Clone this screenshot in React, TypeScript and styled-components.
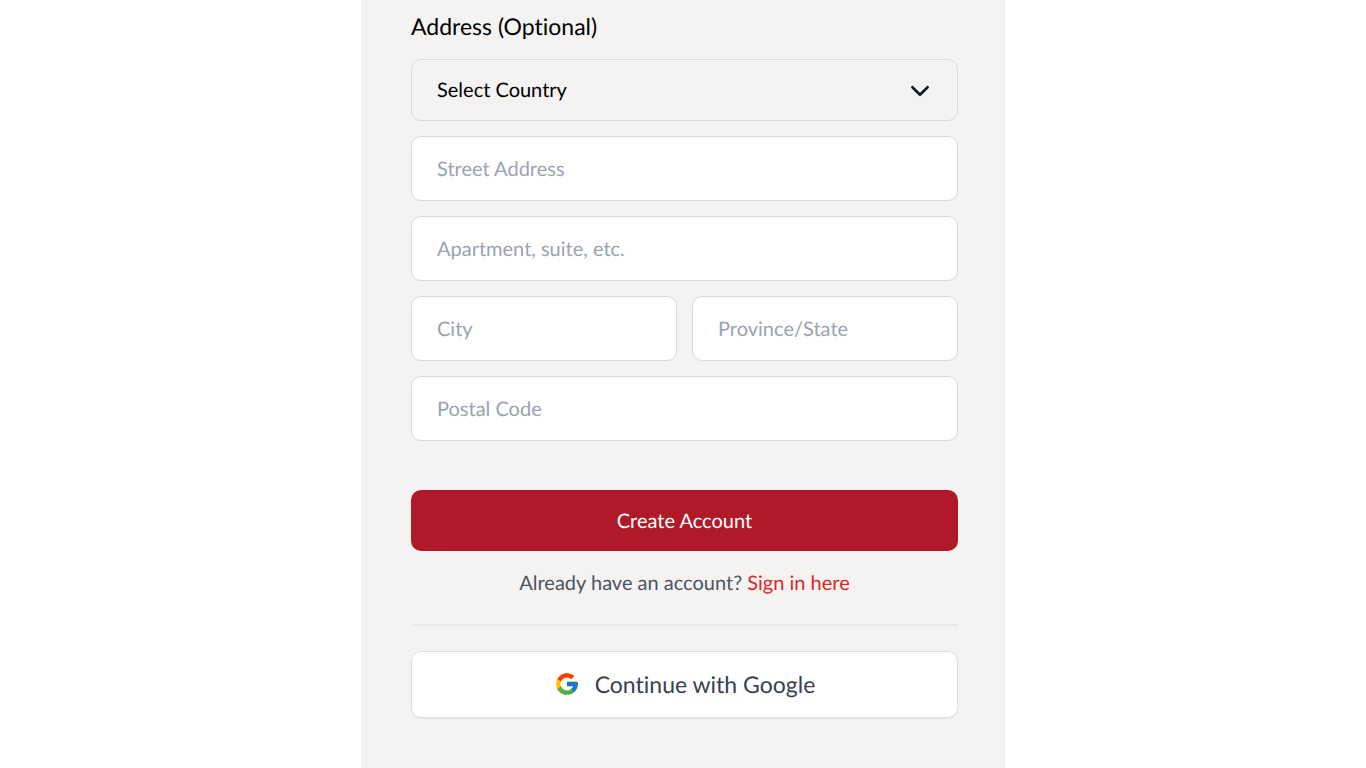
import React from "react";
import styled, { createGlobalStyle, css } from "styled-components";

const GlobalStyle = createGlobalStyle`
  *, *::before, *::after { box-sizing: border-box; }
  body {
    margin: 0;
    background: #fff;
    font-family: Lato, sans-serif;
    color: #000;
  }
  body, input, select, button {
    font-variant-ligatures: none;
    text-rendering: geometricPrecision;
  }
`;

const Page = styled.main`
  display: flex;
  justify-content: center;
  min-height: 100vh;
`;

const Panel = styled.form`
  width: 100%;
  max-width: 644px;
  padding: 8px 47px 50px 50px;
  background: #f4f3f2;
`;

const Address = styled.fieldset`
  display: grid;
  gap: 15px;
  min-width: 0;
  margin: 0;
  padding: 0;
  border: 0;
`;

const Legend = styled.legend`
  padding: 0;
  margin-bottom: 15px;
  font-size: 23px;
  line-height: 36px;
`;

const fieldStyle = css`
  display: block;
  width: 100%;
  min-width: 0;
  height: 65px;
  padding: 0 25px;
  border: 1px solid #d5d9e0;
  border-radius: 10px;
  font-family: Lato, sans-serif;
  font-size: 20px;
  line-height: 30px;
`;

const Field = styled.input`
  ${fieldStyle}
  background: #fff;
  color: #000;
  &::placeholder { color: #9ca3af; opacity: 1; }
`;

const SelectWrap = styled.div`
  position: relative;
`;

const Select = styled.select`
  ${fieldStyle}
  height: 62px;
  appearance: none;
  background: transparent;
  color: #000;
`;

const Chevron = styled.svg`
  position: absolute;
  top: 19px;
  right: 25px;
  width: 26px;
  height: 26px;
  pointer-events: none;
`;

const Row = styled.div`
  display: grid;
  grid-template-columns: 1fr 1fr;
  gap: 15px;
`;

const Submit = styled.button`
  width: 100%;
  height: 61px;
  margin-top: 49px;
  border: 0;
  border-radius: 10px;
  background: #b01a28;
  color: #fff;
  font-family: Lato, sans-serif;
  font-size: 20px;
  line-height: 30px;
`;

const SignIn = styled.p`
  margin: 16px 0 25px;
  text-align: center;
  font-size: 20px;
  line-height: 32px;
  color: #4b5563;
`;

const SignInLink = styled.a`
  color: #dc2626;
  text-decoration: none;
`;

const Divider = styled.hr`
  margin: 0 0 25px;
  border: 0;
  border-top: 2px solid #e8e8e8;
`;

const GoogleButton = styled.button`
  display: flex;
  align-items: center;
  justify-content: center;
  gap: 15px;
  width: 100%;
  height: 67px;
  padding: 0 0 2px;
  border: 1px solid #dcdee1;
  border-radius: 10px;
  background: #fff;
  box-shadow: 0 1px 2px rgba(0, 0, 0, 0.06);
  color: #374151;
  font-family: Lato, sans-serif;
  font-size: 23px;
  line-height: 36px;
`;

const GoogleIcon = () => (
  <svg width="26" height="26" viewBox="0 0 48 48" aria-hidden="true">
    <path fill="#FFC107" d="M43.611 20.083H42V20H24v8h11.303c-1.649 4.657-6.08 8-11.303 8-6.627 0-12-5.373-12-12s5.373-12 12-12c3.059 0 5.842 1.154 7.961 3.039l5.657-5.657C34.046 6.053 29.268 4 24 4 12.955 4 4 12.955 4 24s8.955 20 20 20 20-8.955 20-20c0-1.341-.138-2.65-.389-3.917z" />
    <path fill="#FF3D00" d="M6.306 14.691l6.571 4.819C14.655 15.108 18.961 12 24 12c3.059 0 5.842 1.154 7.961 3.039l5.657-5.657C34.046 6.053 29.268 4 24 4 16.318 4 9.656 8.337 6.306 14.691z" />
    <path fill="#4CAF50" d="M24 44c5.166 0 9.86-1.977 13.409-5.192l-6.19-5.238C29.211 35.091 26.715 36 24 36c-5.202 0-9.619-3.317-11.283-7.946l-6.522 5.025C9.505 39.556 16.227 44 24 44z" />
    <path fill="#1976D2" d="M43.611 20.083H42V20H24v8h11.303c-.792 2.237-2.231 4.166-4.087 5.571l6.193 5.238C36.971 39.205 44 34 44 24c0-1.341-.138-2.65-.389-3.917z" />
  </svg>
);

export default function App() {
  return (
    <>
      <GlobalStyle />
      <Page>
        <Panel onSubmit={(e) => e.preventDefault()}>
          <Address>
            <Legend>Address (Optional)</Legend>
            <SelectWrap>
              <Select aria-label="Country" defaultValue="">
                <option value="">Select Country</option>
              </Select>
              <Chevron viewBox="0 0 24 24" fill="none" stroke="#111827" strokeWidth="2.4" strokeLinecap="round" strokeLinejoin="round" aria-hidden="true">
                <path d="M5 8.500l7 7 7-7" />
              </Chevron>
            </SelectWrap>
            <Field aria-label="Street Address" placeholder="Street Address" />
            <Field aria-label="Apartment, suite, etc." placeholder="Apartment, suite, etc." />
            <Row>
              <Field aria-label="City" placeholder="City" />
              <Field aria-label="Province/State" placeholder="Province/State" />
            </Row>
            <Field aria-label="Postal Code" placeholder="Postal Code" />
          </Address>
          <Submit type="submit">Create Account</Submit>
          <SignIn>
            Already have an account? <SignInLink href="#signin">Sign in here</SignInLink>
          </SignIn>
          <Divider />
          <GoogleButton type="button">
            <GoogleIcon />
            Continue with Google
          </GoogleButton>
        </Panel>
      </Page>
    </>
  );
}
